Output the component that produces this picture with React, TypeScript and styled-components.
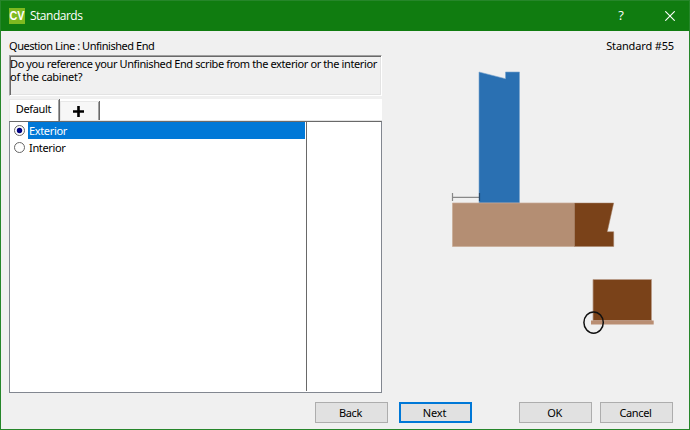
import React from "react";
import styled, { createGlobalStyle } from "styled-components";

const GlobalStyle = createGlobalStyle`
  *, *::before, *::after { box-sizing: border-box; }
  body { margin: 0; background: #f0f0f0; }
`;

const Window = styled.div`
  width: 690px;
  height: 430px;
  display: flex;
  flex-direction: column;
  background: #f0f0f0;
  border: 1px solid #26862a;
  color: #000;
  font: 11px/13px "Noto Sans", sans-serif;
  overflow: hidden;
`;

const TitleBar = styled.header`
  flex: none;
  height: 30px;
  display: flex;
  align-items: center;
  padding: 0 14px 0 8px;
  background: #107c10;
  color: #fff;
`;

const Title = styled.h1`
  flex: 1;
  margin: 0 0 0 5px;
  font: 400 12px/16px "Open Sans", sans-serif;
  letter-spacing: -0.5px;
`;

const WindowIcon = styled.svg`
  display: block;
  flex: none;
`;

const HelpMark = styled.span`
  width: 10px;
  margin: -3px 39px 0 0;
  text-align: center;
  font: 13px/16px "Open Sans", sans-serif;
`;

const Content = styled.main`
  flex: 1;
  display: flex;
  padding: 8px 0 0 8px;
`;

const QuestionColumn = styled.section`
  width: 373px;
  display: flex;
  flex-direction: column;
`;

const Label = styled.span<{ $spacing?: number }>`
  letter-spacing: ${(p) => p.$spacing ?? -0.35}px;
  white-space: nowrap;
`;

const QuestionHeading = styled.div`
  height: 16px;
`;

const QuestionBox = styled.div`
  display: flex;
  flex-direction: column;
  height: 41px;
  padding: 1px 0 0;
  border: 1px solid;
  border-color: #a0a0a0 #fff #fff #a0a0a0;
  box-shadow: inset 1px 1px #696969, inset -1px -1px #e3e3e3;
`;

const TabStrip = styled.div`
  display: flex;
  align-items: flex-end;
  height: 22px;
  margin-top: 3px;
  background: #fff;
  border-bottom: 1px solid #e3e3e3;
`;

const Tab = styled.button<{ $active?: boolean }>`
  display: flex;
  align-items: center;
  justify-content: center;
  width: ${(p) => (p.$active ? 51 : 40)}px;
  height: ${(p) => (p.$active ? 22 : 19)}px;
  margin-bottom: ${(p) => (p.$active ? -1 : 0)}px;
  padding: ${(p) => (p.$active ? "0 1px 3px 0" : "1px 3px 0 0")};
  border: 0 solid #696969;
  border-right-width: 1px;
  background: ${(p) => (p.$active ? "#fff" : "#f7f7f7")};
  box-shadow: inset 1px 1px #e8e8e8, inset -1px 0 #a0a0a0;
  color: inherit;
  font: inherit;
`;

const AnswerList = styled.div`
  display: flex;
  height: 272px;
  background: #fff;
  border: 1px solid #828790;
  border-top-color: #696969;
`;

const Answers = styled.div`
  width: 296px;
`;

const ExtraColumn = styled.div`
  flex: 1;
  height: 269px;
  border-left: 1px solid #696969;
`;

const AnswerRow = styled.label`
  display: flex;
  align-items: stretch;
  height: 17px;
`;

const RadioCell = styled.span`
  width: 18px;
  padding: 2px 0 0 3px;
`;

const AnswerText = styled.span<{ $selected?: boolean }>`
  flex: 1;
  margin-right: 1px;
  padding: 2px 0 0 1px;
  background: ${(p) => (p.$selected ? "#0078d7" : "transparent")};
  color: ${(p) => (p.$selected ? "#fff" : "#000")};
`;

const PreviewColumn = styled.aside`
  flex: 1;
  display: flex;
  flex-direction: column;
  align-items: flex-end;
`;

const StandardNumber = styled.div`
  height: 16px;
  padding-right: 15px;
`;

const Drawing = styled.svg`
  display: block;
  width: 250px;
  height: 290px;
`;

const ButtonBar = styled.footer`
  flex: none;
  display: flex;
  height: 27px;
  padding-left: 314px;
`;

const Button = styled.button<{ $primary?: boolean; $gap?: number }>`
  width: 73px;
  height: 21px;
  margin: 0 ${(p) => p.$gap ?? 0}px 0 0;
  padding: 0 2px 1px 0;
  display: flex;
  align-items: center;
  justify-content: center;
  border: ${(p) => (p.$primary ? "2px solid #0078d7" : "1px solid #adadad")};
  background: #e1e1e1;
  color: #000;
  font: inherit;
`;

function Radio({ checked }: { checked?: boolean }) {
  return (
    <svg width="13" height="13" viewBox="0 0 13 13">
      <circle cx="6.5" cy="6.5" r="5" fill="#fff" stroke="#666" />
      {checked && <circle cx="6.5" cy="6.5" r="2.7" fill="#000080" />}
    </svg>
  );
}

function CabinetDrawing() {
  return (
    <Drawing viewBox="439 55 250 290">
      <path d="M479 72L505.5 78.7V72H519.5V203H479Z" fill="#2a70b2" stroke="#79a5cf" strokeWidth=".6" />
      <path d="M452.5 203H574.5V246.5H452.5Z" fill="#b48e73" stroke="#c9aa95" strokeWidth=".7" />
      <path d="M574.5 203H613.7L607.3 231.7H613.7V246.5H574.5Z" fill="#7a4219" stroke="#a78368" strokeWidth=".5" />
      <path d="M452.5 193V201M479.5 193V201M452.5 197.3H479.5" fill="none" stroke="#000" strokeOpacity=".43" strokeWidth="1.2" />
      <path d="M593 279.5H651.5V320.5H593Z" fill="#7a4219" stroke="#b99c89" strokeWidth=".8" />
      <path d="M591 320.5H653.7V324.5H591Z" fill="#b98e73" />
      <ellipse cx="593.6" cy="322.6" rx="9.7" ry="10.6" fill="none" stroke="#111" strokeWidth="1.5" />
    </Drawing>
  );
}

export default function App() {
  return (
    <>
      <GlobalStyle />
      <Window>
        <TitleBar>
          <WindowIcon width="16" height="16" viewBox="0 0 16 16">
            <rect width="16" height="16" fill="#7fba20" />
            <text x="8" y="12" textAnchor="middle" textLength="15" lengthAdjust="spacingAndGlyphs" fill="#fff" fontFamily="Liberation Sans" fontWeight="700" fontSize="12">CV</text>
          </WindowIcon>
          <Title>Standards</Title>
          <HelpMark>?</HelpMark>
          <WindowIcon width="10" height="10" viewBox="0 0 10 10">
            <path d="M.3 .3L9.7 9.7M9.7 .3L.3 9.7" stroke="#fff" strokeWidth="1.1" />
          </WindowIcon>
        </TitleBar>
        <Content>
          <QuestionColumn>
            <QuestionHeading><Label $spacing={-0.45}>Question Line : Unfinished End</Label></QuestionHeading>
            <QuestionBox>
              <Label $spacing={-0.39}>Do you reference your Unfinished End scribe from the exterior or the interior</Label>
              <Label $spacing={-0.25}>of the cabinet?</Label>
            </QuestionBox>
            <TabStrip>
              <Tab $active><Label>Default</Label></Tab>
              <Tab aria-label="Add tab">
                <svg width="11" height="11" viewBox="0 0 11 11"><path d="M5.5 0V11M0 5.5H11" stroke="#000" strokeWidth="2.6" /></svg>
              </Tab>
            </TabStrip>
            <AnswerList>
              <Answers>
                <AnswerRow>
                  <RadioCell><Radio checked /></RadioCell>
                  <AnswerText $selected><Label>Exterior</Label></AnswerText>
                </AnswerRow>
                <AnswerRow>
                  <RadioCell><Radio /></RadioCell>
                  <AnswerText><Label>Interior</Label></AnswerText>
                </AnswerRow>
              </Answers>
              <ExtraColumn />
            </AnswerList>
          </QuestionColumn>
          <PreviewColumn>
            <StandardNumber><Label $spacing={-0.15}>Standard #55</Label></StandardNumber>
            <CabinetDrawing />
          </PreviewColumn>
        </Content>
        <ButtonBar>
          <Button $gap={11}><Label>Back</Label></Button>
          <Button $primary $gap={47}><Label $spacing={-0.1}>Next</Label></Button>
          <Button $gap={8}><Label>OK</Label></Button>
          <Button><Label>Cancel</Label></Button>
        </ButtonBar>
      </Window>
    </>
  );
}
